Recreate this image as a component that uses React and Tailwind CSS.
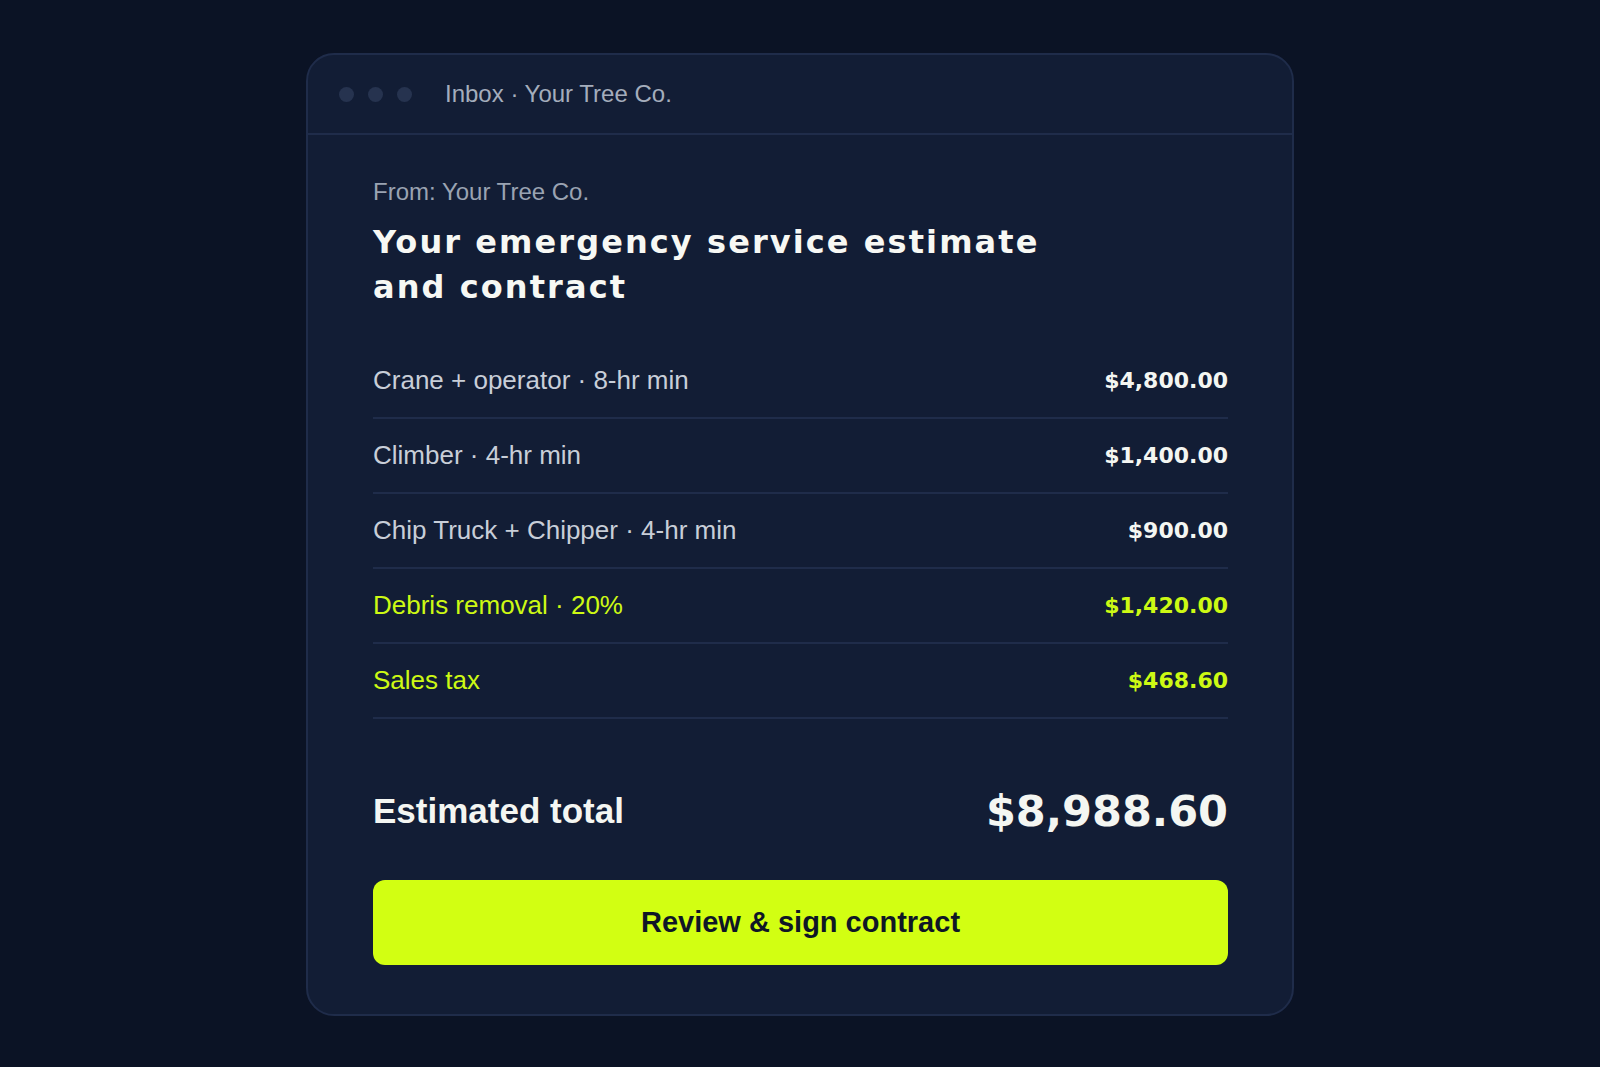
import React from 'react';

const items = [
  { label: 'Crane + operator · 8-hr min', amount: '$4,800.00' },
  { label: 'Climber · 4-hr min', amount: '$1,400.00' },
  { label: 'Chip Truck + Chipper · 4-hr min', amount: '$900.00' },
  { label: 'Debris removal · 20%', amount: '$1,420.00', accent: true },
  { label: 'Sales tax', amount: '$468.60', accent: true },
];

export default function App() {
  return (
    <div className="min-h-screen bg-[#0b1325] pt-[53px] pb-[54px] font-['Liberation_Sans',Arial,sans-serif]">
      <div className="mx-auto w-[988px] rounded-[28px] border-2 border-[#1f2c4a] bg-[#121d35] overflow-hidden">
        {/* window bar */}
        <div className="flex h-[80px] items-center border-b-2 border-[#1f2c4a] pl-[31px]">
          <div className="flex gap-[14px]">
            <span className="h-[15px] w-[15px] rounded-full bg-[#26334f]"></span>
            <span className="h-[15px] w-[15px] rounded-full bg-[#26334f]"></span>
            <span className="h-[15px] w-[15px] rounded-full bg-[#26334f]"></span>
          </div>
          <span className="ml-[33px] text-[24px] text-[#a4adbc]">Inbox · Your Tree Co.</span>
        </div>

        <div className="pl-[65px] pr-16 pt-[41px] pb-[49px]">
          <p className="text-[24px] leading-[32px] text-[#9aa3b2]">From: Your Tree Co.</p>
          <h1 className="mt-[12px] max-w-[720px] font-['DejaVu_Sans',sans-serif] text-[32px] font-bold leading-[45px] tracking-[0.065em] text-[#f7f8f4]">
            Your emergency service estimate and contract
          </h1>

          <div className="mt-[34px]">
            {items.map(({ label, amount, accent }) => (
              <div key={label} className="flex h-[75px] items-center justify-between border-b-2 border-[#1f2c4a]">
                <span className={`text-[26px] ${accent ? 'text-[#cdf914]' : 'text-[#c8ced8]'}`}>{label}</span>
                <span className={`font-['DejaVu_Sans',sans-serif] text-[22px] font-bold ${accent ? 'text-[#cdf914]' : 'text-[#f4f6f2]'}`}>
                  {amount}
                </span>
              </div>
            ))}
          </div>

          <div className="mt-[62px] flex h-[60px] items-center justify-between">
            <span className="text-[35px] font-bold text-[#f4f6f2]">Estimated total</span>
            <span className="font-['DejaVu_Sans',sans-serif] text-[43px] font-bold text-[#f4f6f2]">$8,988.60</span>
          </div>

          <button className="mt-[39px] flex h-[85px] w-full items-center justify-center rounded-[12px] bg-[#d2ff12] text-[29px] font-bold text-[#0f1626]">
            Review &amp; sign contract
          </button>
        </div>
      </div>
    </div>
  );
}
